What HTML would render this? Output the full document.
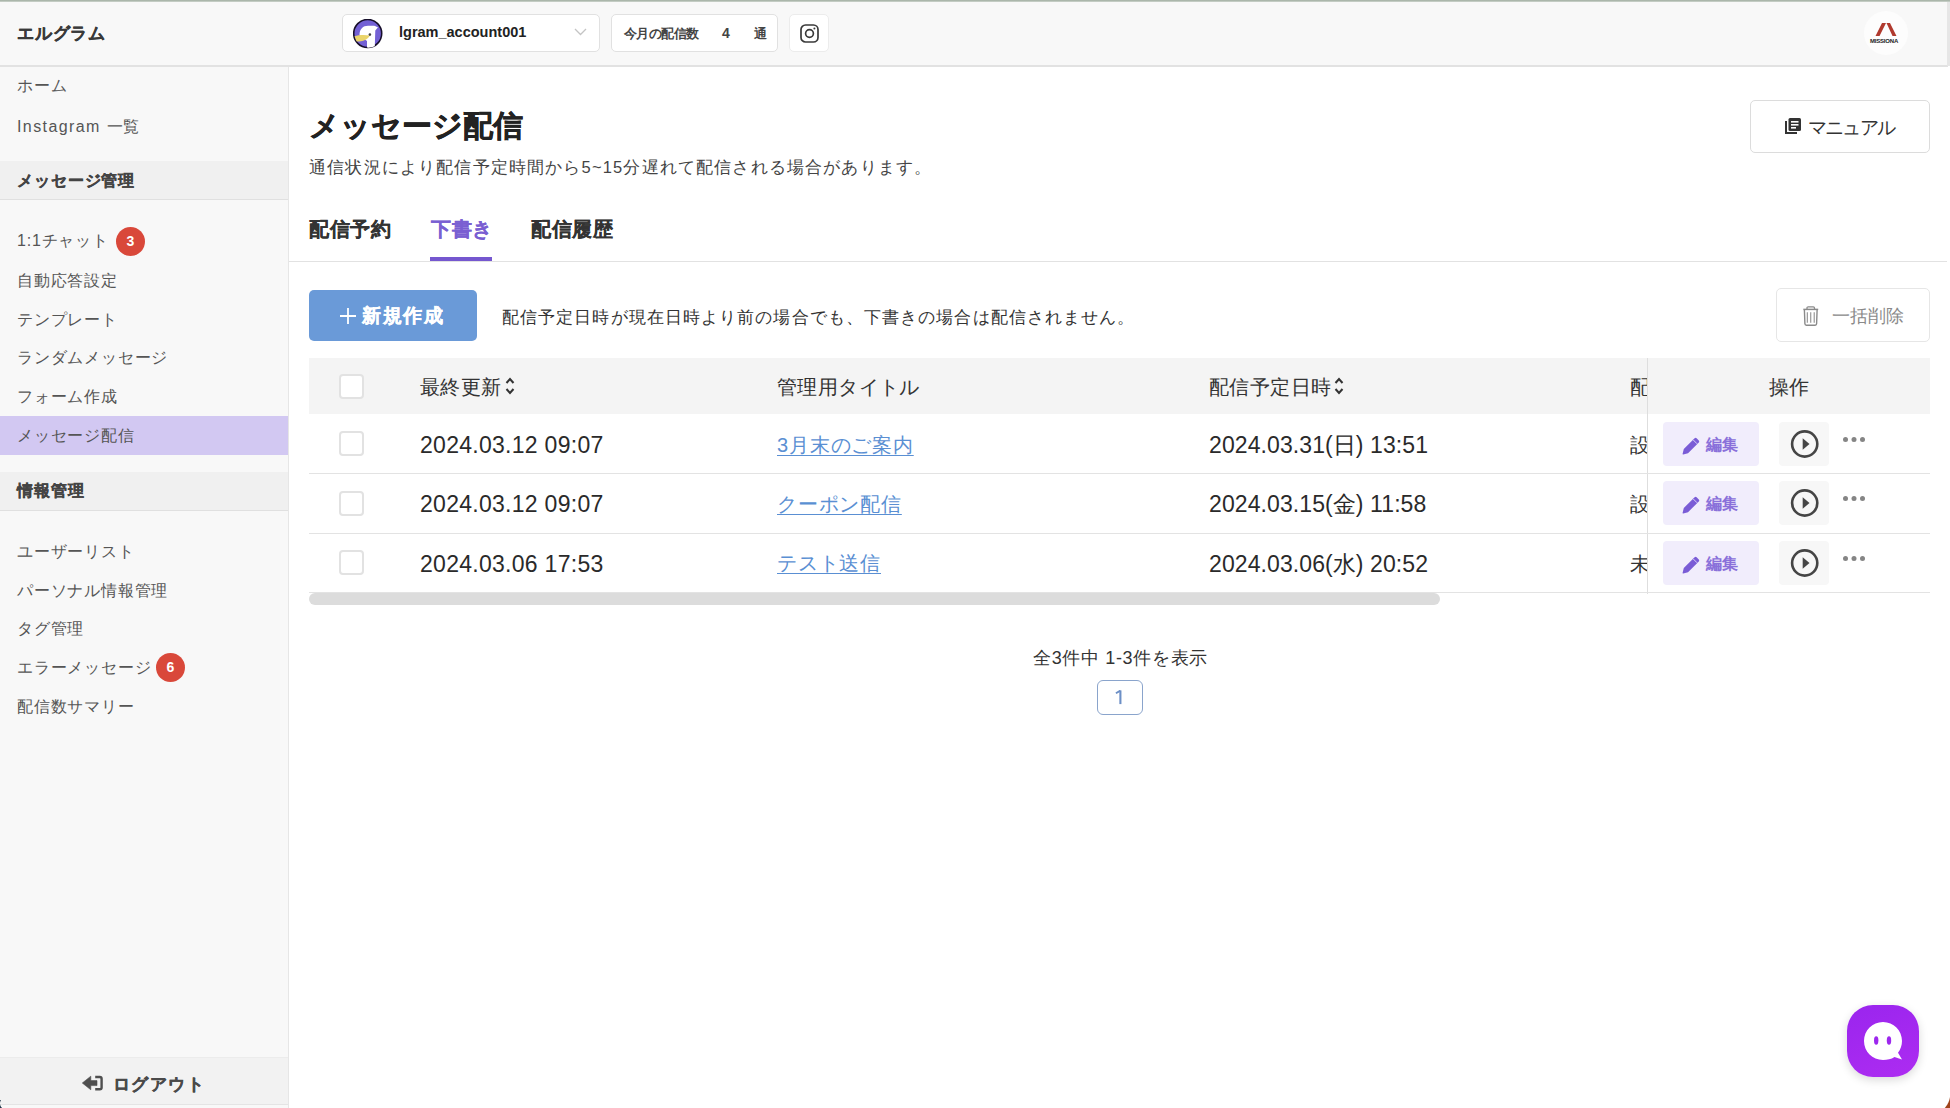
<!DOCTYPE html>
<html lang="ja">
<head>
<meta charset="utf-8">
<style>
*{margin:0;padding:0;box-sizing:border-box}
html,body{width:1950px;height:1108px;overflow:hidden;background:#fff}
body{font-family:"Liberation Sans",sans-serif;color:#333;position:relative}
.a{position:absolute;white-space:nowrap;line-height:1}
#topline{left:0;top:0;width:1950px;height:2px;background:linear-gradient(#9fac9f,#cfd6cf)}
#header{left:0;top:2px;width:1948px;height:65px;background:#f8f8f8;border-bottom:2px solid #e2e2e2}
#rightedge{left:1947px;top:2px;width:3px;height:64px;background:#e6e6e6}
#sidebar{left:0;top:67px;width:289px;height:1041px;background:#f8f8f8;border-right:1px solid #e6e6e6}
.box{background:#fff;border:1px solid #e1e1e1;border-radius:5px}
.side{left:17px;font-size:16px;color:#555;letter-spacing:0.8px;margin-top:1px}
.sec{left:0;width:288px;height:39px;background:#f0f0f0;border-bottom:1px solid #e0e0e0}
.sech{left:17px;font-size:16px;font-weight:bold;color:#444;-webkit-text-stroke:0.3px #444;letter-spacing:0.9px;margin-top:0.8px}
.badge{width:29px;height:29px;border-radius:50%;background:#d9483a;color:#fff;font-size:14px;font-weight:bold;text-align:center;line-height:29px}
.tab{font-size:20px;font-weight:bold;color:#333;-webkit-text-stroke:0.15px currentColor;letter-spacing:0.6px;margin-top:1px}
.th{font-size:19.5px;color:#333;letter-spacing:0.4px;margin-top:1px}
.td{font-size:23px;color:#2a2a2a;letter-spacing:0.28px;margin-top:1.8px}
.lnk{font-size:20px;color:#5a8fd3;text-decoration:underline;text-underline-offset:3px;text-decoration-thickness:1px;letter-spacing:0.8px;margin-top:1.3px}
.cb{width:25px;height:25px;border:2px solid #e2e2e2;border-radius:4px;background:#fff}
.rowline{left:309px;width:1621px;height:1px;background:#e3e3e3}
.edit{width:96px;height:44px;background:#f1edfc;border-radius:4px}
.edtx{font-size:16px;font-weight:bold;color:#8a70da}
.play{width:50px;height:44px;background:#f7f7f7;border-radius:4px}
</style>
</head>
<body>
<div class="a" id="topline"></div>
<div class="a" id="header"></div>
<div class="a" id="sidebar"></div>
<div class="a" id="rightedge"></div>

<!-- header content -->
<div class="a" style="left:17px;top:25px;font-size:17px;font-weight:bold;color:#3a3a3a;-webkit-text-stroke:0.3px #3a3a3a;letter-spacing:0.75px">エルグラム</div>

<div class="a box" style="left:342px;top:14px;width:258px;height:38px"></div>
<svg class="a" style="left:352.5px;top:19px" width="30" height="30" viewBox="0 0 30 30">
  <circle cx="14.7" cy="14.5" r="14" fill="#7360d4" stroke="#170f2a" stroke-width="1.6"/>
  <path d="M6.5 16 C6.5 10 10 6.7 15 6.7 L21 6.7 C22.5 6.7 23.5 8 25 8.3 L22.3 11.5 L21.8 27 C19.5 28.3 17 28.8 14 28.6 L14 22 Z" fill="#fff"/>
  <path d="M1.5 17.2 C6 15.8 12 15.6 17 16.6 C14.5 21 9 23.2 3.5 22.3 Z" fill="#ead469"/>
  <circle cx="16.9" cy="15.6" r="1.3" fill="#444"/>
</svg>
<div class="a" style="left:399px;top:25px;font-size:14.5px;font-weight:bold;color:#222">lgram_account001</div>
<svg class="a" style="left:574px;top:28px" width="13" height="8" viewBox="0 0 13 8"><path d="M1 1 L6.5 6.5 L12 1" fill="none" stroke="#c4c4c4" stroke-width="1.3"/></svg>

<div class="a box" style="left:611px;top:14px;width:167px;height:38px"></div>
<div class="a" style="left:624px;top:28px;font-size:12.5px;font-weight:bold;color:#444;letter-spacing:-0.55px">今月の配信数</div>
<div class="a" style="left:722px;top:26px;font-size:14px;font-weight:bold;color:#444">4</div>
<div class="a" style="left:754px;top:28px;font-size:12.5px;font-weight:bold;color:#444">通</div>

<div class="a box" style="left:789px;top:14px;width:40px;height:38px;border-color:#ececec"></div>
<svg class="a" style="left:800px;top:24px" width="19" height="19" viewBox="0 0 19 19">
  <rect x="1" y="1" width="17" height="17" rx="4.5" fill="none" stroke="#3a3a3a" stroke-width="1.7"/>
  <circle cx="9.5" cy="9.5" r="3.9" fill="none" stroke="#3a3a3a" stroke-width="1.7"/>
  <circle cx="14.4" cy="4.6" r="1" fill="#3a3a3a"/>
</svg>

<div class="a" style="left:1864px;top:11px;width:44px;height:44px;border-radius:50%;background:#fdfdfd"></div>
<svg class="a" style="left:1874px;top:22px" width="24" height="16" viewBox="0 0 24 16">
  <path d="M1.5 14 L8 1 L12 1 L5.5 14Z M12.5 1 L16 1 L22.5 14 L18.5 14Z" fill="#b03a2e"/>
</svg>
<div class="a" style="left:1870px;top:38px;font-size:6px;font-weight:bold;color:#222;letter-spacing:-0.2px">MISSIONA</div>

<!-- sidebar content -->
<div class="a side" style="top:77px">ホーム</div>
<div class="a side" style="top:118px"><span style="letter-spacing:1.4px">Instagram </span>一覧</div>
<div class="a sec" style="top:161px"></div>
<div class="a sech" style="top:172px">メッセージ管理</div>
<div class="a side" style="top:232px">1:1チャット</div>
<div class="a badge" style="left:116px;top:227px">3</div>
<div class="a side" style="top:272px">自動応答設定</div>
<div class="a side" style="top:311px">テンプレート</div>
<div class="a side" style="top:349px">ランダムメッセージ</div>
<div class="a side" style="top:388px">フォーム作成</div>
<div class="a" style="left:0;top:416px;width:288px;height:38.6px;background:#d2c8f2"></div>
<div class="a side" style="top:427px">メッセージ配信</div>
<div class="a sec" style="top:472px"></div>
<div class="a sech" style="top:482px">情報管理</div>
<div class="a side" style="top:543px">ユーザーリスト</div>
<div class="a side" style="top:582px">パーソナル情報管理</div>
<div class="a side" style="top:620px">タグ管理</div>
<div class="a side" style="top:659px">エラーメッセージ</div>
<div class="a badge" style="left:156px;top:653px">6</div>
<div class="a side" style="top:698px">配信数サマリー</div>

<div class="a" style="left:0;top:1057px;width:288px;height:48px;background:#f2f2f2;border-top:1px solid #ececec;border-bottom:1px solid #e4e4e4"></div>
<svg class="a" style="left:82px;top:1075px" width="22" height="17" viewBox="0 0 22 17">
  <path d="M0.3 8 L8.8 1.2 L8.8 5.6 L15 5.6 L15 10.6 L8.8 10.6 L8.8 14.8 Z" fill="#4f4f4f" stroke="#4f4f4f" stroke-width="0.6" stroke-linejoin="round"/>
  <path d="M13.2 2 L17.8 2 Q19.6 2 19.6 3.8 L19.6 12.4 Q19.6 14.2 17.8 14.2 L13.2 14.2" fill="none" stroke="#4f4f4f" stroke-width="2.4"/>
</svg>
<div class="a" style="left:113px;top:1076px;font-size:16.5px;font-weight:bold;color:#4a4a4a;-webkit-text-stroke:0.35px #4a4a4a;letter-spacing:1.45px">ログアウト</div>

<!-- main -->
<div class="a" style="left:309px;top:111px;font-size:30px;font-weight:bold;color:#222;-webkit-text-stroke:0.5px #222">メッセージ配信</div>
<div class="a" style="left:309px;top:159px;font-size:16.5px;color:#444;letter-spacing:1.17px">通信状況により配信予定時間から5~15分遅れて配信される場合があります。</div>

<div class="a box" style="left:1750px;top:100px;width:180px;height:53px;border-color:#dcdcdc"></div>
<svg class="a" style="left:1784px;top:117px" width="18" height="18" viewBox="0 0 18 18">
  <path d="M2 4 L2 16 L13 16" fill="none" stroke="#333" stroke-width="2"/>
  <rect x="4.5" y="1" width="12.5" height="13" rx="1.5" fill="#333"/>
  <rect x="7" y="4" width="7.5" height="1.6" fill="#fff"/>
  <rect x="7" y="7" width="7.5" height="1.6" fill="#fff"/>
  <rect x="7" y="10" width="5" height="1.6" fill="#fff"/>
</svg>
<div class="a" style="left:1808px;top:118px;font-size:19px;color:#333;letter-spacing:-1.8px">マニュアル</div>

<div class="a tab" style="left:309px;top:218px">配信予約</div>
<div class="a tab" style="left:431px;top:218px;color:#7a5fd2">下書き</div>
<div class="a tab" style="left:531px;top:218px">配信履歴</div>
<div class="a" style="left:430px;top:257px;width:62px;height:4px;background:#7557cf"></div>
<div class="a" style="left:289px;top:261px;width:1658px;height:1px;background:#e2e2e2"></div>

<div class="a" style="left:309px;top:290px;width:168px;height:51px;background:#6a9ad8;border-radius:5px"></div>
<svg class="a" style="left:340px;top:308px" width="16" height="16" viewBox="0 0 16 16"><path d="M8 0 V16 M0 8 H16" stroke="#fff" stroke-width="1.8"/></svg>
<div class="a" style="left:362px;top:306px;font-size:19px;font-weight:bold;color:#fff;-webkit-text-stroke:0.35px #fff;letter-spacing:1.6px">新規作成</div>
<div class="a" style="left:502px;top:309px;font-size:17px;color:#333;letter-spacing:1.1px">配信予定日時が現在日時より前の場合でも、下書きの場合は配信されません。</div>

<div class="a box" style="left:1776px;top:288px;width:154px;height:54px;border-color:#e6e6e6"></div>
<svg class="a" style="left:1803px;top:306px" width="16" height="20" viewBox="0 0 16 20">
  <path d="M0.3 3.4 H15.2" stroke="#8a8a8a" stroke-width="1.5" fill="none"/>
  <path d="M4 3.4 V2 Q4 0.8 5.2 0.8 H10.3 Q11.5 0.8 11.5 2 V3.4" stroke="#8a8a8a" stroke-width="1.3" fill="none"/>
  <path d="M1.4 4 L1.9 17.8 Q2 19.2 3.3 19.2 H12.2 Q13.5 19.2 13.6 17.8 L14.1 4" stroke="#8a8a8a" stroke-width="1.4" fill="none"/>
  <path d="M4.3 6.2 V16.8 M7.75 6.2 V16.8 M11.2 6.2 V16.8" stroke="#8a8a8a" stroke-width="1.05" fill="none"/>
</svg>
<div class="a" style="left:1832px;top:307px;font-size:18px;color:#8a8a8a">一括削除</div>

<!-- table -->
<div class="a" style="left:309px;top:358px;width:1621px;height:56px;background:#f4f4f4"></div>
<div class="a cb" style="left:339px;top:374px"></div>
<div class="a th" style="left:420px;top:377px">最終更新</div>
<svg class="a" style="left:505px;top:377px" width="10" height="18" viewBox="0 0 10 18"><path d="M1.5 6 L5 2 L8.5 6 M1.5 12 L5 16 L8.5 12" fill="none" stroke="#333" stroke-width="2"/></svg>
<div class="a th" style="left:777px;top:377px">管理用タイトル</div>
<div class="a th" style="left:1209px;top:377px">配信予定日時</div>
<svg class="a" style="left:1334px;top:377px" width="10" height="18" viewBox="0 0 10 18"><path d="M1.5 6 L5 2 L8.5 6 M1.5 12 L5 16 L8.5 12" fill="none" stroke="#333" stroke-width="2"/></svg>
<div class="a" style="left:1630px;top:358px;width:17px;height:236px;overflow:hidden">
  <div class="a th" style="left:0;top:19px">配</div>
  <div class="a th" style="left:0;top:77px">設</div>
  <div class="a th" style="left:0;top:136px">設</div>
  <div class="a th" style="left:0;top:196px">未</div>
</div>
<div class="a" style="left:1647px;top:358px;width:1px;height:236px;background:#dedede"></div>
<div class="a th" style="left:1769px;top:377px">操作</div>

<div class="a rowline" style="top:473px"></div>
<div class="a rowline" style="top:533px"></div>
<div class="a rowline" style="top:592px"></div>

<!-- row 1 -->
<div class="a cb" style="left:339px;top:431px"></div>
<div class="a td" style="left:420px;top:432px">2024.03.12 09:07</div>
<div class="a lnk" style="left:777px;top:434px">3月末のご案内</div>
<div class="a td" style="letter-spacing:0.09px;left:1209px;top:432px">2024.03.31(日) 13:51</div>
<!-- row 2 -->
<div class="a cb" style="left:339px;top:491px"></div>
<div class="a td" style="left:420px;top:491px">2024.03.12 09:07</div>
<div class="a lnk" style="left:777px;top:493px">クーポン配信</div>
<div class="a td" style="letter-spacing:0.09px;left:1209px;top:491px">2024.03.15(金) 11:58</div>
<!-- row 3 -->
<div class="a cb" style="left:339px;top:550px"></div>
<div class="a td" style="left:420px;top:551px">2024.03.06 17:53</div>
<div class="a lnk" style="left:777px;top:552px">テスト送信</div>
<div class="a td" style="letter-spacing:0.09px;left:1209px;top:551px">2024.03.06(水) 20:52</div>

<!-- actions -->
<div class="a edit" style="left:1663px;top:422px"></div>
<div class="a edit" style="left:1663px;top:481px"></div>
<div class="a edit" style="left:1663px;top:541px"></div>
<div class="a play" style="left:1779px;top:422px"></div>
<div class="a play" style="left:1779px;top:481px"></div>
<div class="a play" style="left:1779px;top:541px"></div>


<!-- edit/play icons -->
<svg class="a" style="left:1682px;top:437px" width="18" height="18" viewBox="0 0 18 18"><path d="M12.6 1.2 Q13.6 0.3 14.6 1.2 L16.8 3.4 Q17.7 4.4 16.8 5.4 L6 16.2 L1.2 17.4 Q0.4 17.5 0.6 16.8 L1.8 12Z" fill="#7a5cd6"/><path d="M11.2 2.9 L15.1 6.8" stroke="#d9cff7" stroke-width="1"/></svg>
<div class="a edtx" style="left:1706px;top:437px">編集</div>
<svg class="a" style="left:1790px;top:429px" width="30" height="30" viewBox="0 0 30 30"><circle cx="14.7" cy="15" r="12.6" fill="none" stroke="#454545" stroke-width="2.6"/><path d="M12.7 9.3 L19.5 15 L12.7 20.7Z" fill="#454545"/></svg>
<svg class="a" style="left:1842px;top:436px" width="24" height="8" viewBox="0 0 24 8"><circle cx="3.5" cy="3.6" r="2.5" fill="#858585"/><circle cx="12" cy="3.6" r="2.5" fill="#858585"/><circle cx="20.5" cy="3.6" r="2.5" fill="#858585"/></svg>
<svg class="a" style="left:1682px;top:496px" width="18" height="18" viewBox="0 0 18 18"><path d="M12.6 1.2 Q13.6 0.3 14.6 1.2 L16.8 3.4 Q17.7 4.4 16.8 5.4 L6 16.2 L1.2 17.4 Q0.4 17.5 0.6 16.8 L1.8 12Z" fill="#7a5cd6"/><path d="M11.2 2.9 L15.1 6.8" stroke="#d9cff7" stroke-width="1"/></svg>
<div class="a edtx" style="left:1706px;top:496px">編集</div>
<svg class="a" style="left:1790px;top:488px" width="30" height="30" viewBox="0 0 30 30"><circle cx="14.7" cy="15" r="12.6" fill="none" stroke="#454545" stroke-width="2.6"/><path d="M12.7 9.3 L19.5 15 L12.7 20.7Z" fill="#454545"/></svg>
<svg class="a" style="left:1842px;top:495px" width="24" height="8" viewBox="0 0 24 8"><circle cx="3.5" cy="3.6" r="2.5" fill="#858585"/><circle cx="12" cy="3.6" r="2.5" fill="#858585"/><circle cx="20.5" cy="3.6" r="2.5" fill="#858585"/></svg>
<svg class="a" style="left:1682px;top:556px" width="18" height="18" viewBox="0 0 18 18"><path d="M12.6 1.2 Q13.6 0.3 14.6 1.2 L16.8 3.4 Q17.7 4.4 16.8 5.4 L6 16.2 L1.2 17.4 Q0.4 17.5 0.6 16.8 L1.8 12Z" fill="#7a5cd6"/><path d="M11.2 2.9 L15.1 6.8" stroke="#d9cff7" stroke-width="1"/></svg>
<div class="a edtx" style="left:1706px;top:556px">編集</div>
<svg class="a" style="left:1790px;top:548px" width="30" height="30" viewBox="0 0 30 30"><circle cx="14.7" cy="15" r="12.6" fill="none" stroke="#454545" stroke-width="2.6"/><path d="M12.7 9.3 L19.5 15 L12.7 20.7Z" fill="#454545"/></svg>
<svg class="a" style="left:1842px;top:555px" width="24" height="8" viewBox="0 0 24 8"><circle cx="3.5" cy="3.6" r="2.5" fill="#858585"/><circle cx="12" cy="3.6" r="2.5" fill="#858585"/><circle cx="20.5" cy="3.6" r="2.5" fill="#858585"/></svg>
<div class="a" style="left:309px;top:593px;width:1131px;height:12px;background:#dcdcdc;border-radius:6px"></div>

<!-- pagination -->
<div class="a" style="left:1033px;top:649px;font-size:18px;color:#333;letter-spacing:0.65px">全3件中 1-3件を表示</div>
<div class="a" style="left:1097px;top:680px;width:46px;height:35px;border:1.6px solid #8aa4cc;border-radius:6px"></div>
<svg class="a" style="left:1115px;top:690px" width="8" height="15" viewBox="0 0 8 15"><path d="M5.4 0.4 V14.1" stroke="#6c8fc6" stroke-width="2.1"/><path d="M0.9 3.2 L5.4 0.6" stroke="#6c8fc6" stroke-width="1.9"/></svg>

<!-- chat -->
<div class="a" style="left:1847px;top:1005px;width:72px;height:72px;border-radius:26px;background:linear-gradient(160deg,#9a25ee,#ad2cf1);box-shadow:0 3px 10px rgba(0,0,0,0.15)"></div>
<svg class="a" style="left:1862px;top:1020px" width="42" height="42" viewBox="0 0 42 42"><path d="M21 2 C31.5 2 40 10.5 40 21 C40 25.5 38.5 29.5 36 32.8 L40 39.5 L32.5 37 C29.2 39.2 25.2 40 21 40 C10.5 40 2 31.5 2 21 C2 10.5 10.5 2 21 2Z" fill="#fff"/><ellipse cx="14.2" cy="20.5" rx="2.2" ry="4.2" fill="#9d27ee"/><ellipse cx="27" cy="20.5" rx="2.2" ry="4.2" fill="#9d27ee"/></svg>
<div class="a" style="left:0;top:1100px;width:8px;height:8px;background:radial-gradient(circle 5.8px at 5.8px 3.4px,rgba(0,0,0,0) 5.3px,#1f3548 6.3px)"></div>
<div class="a" style="left:1940px;top:1094px;width:10px;height:14px;background:radial-gradient(circle 21px at -10.3px 0,rgba(0,0,0,0) 20px,#a0441c 21px)"></div>
</body>
</html>
